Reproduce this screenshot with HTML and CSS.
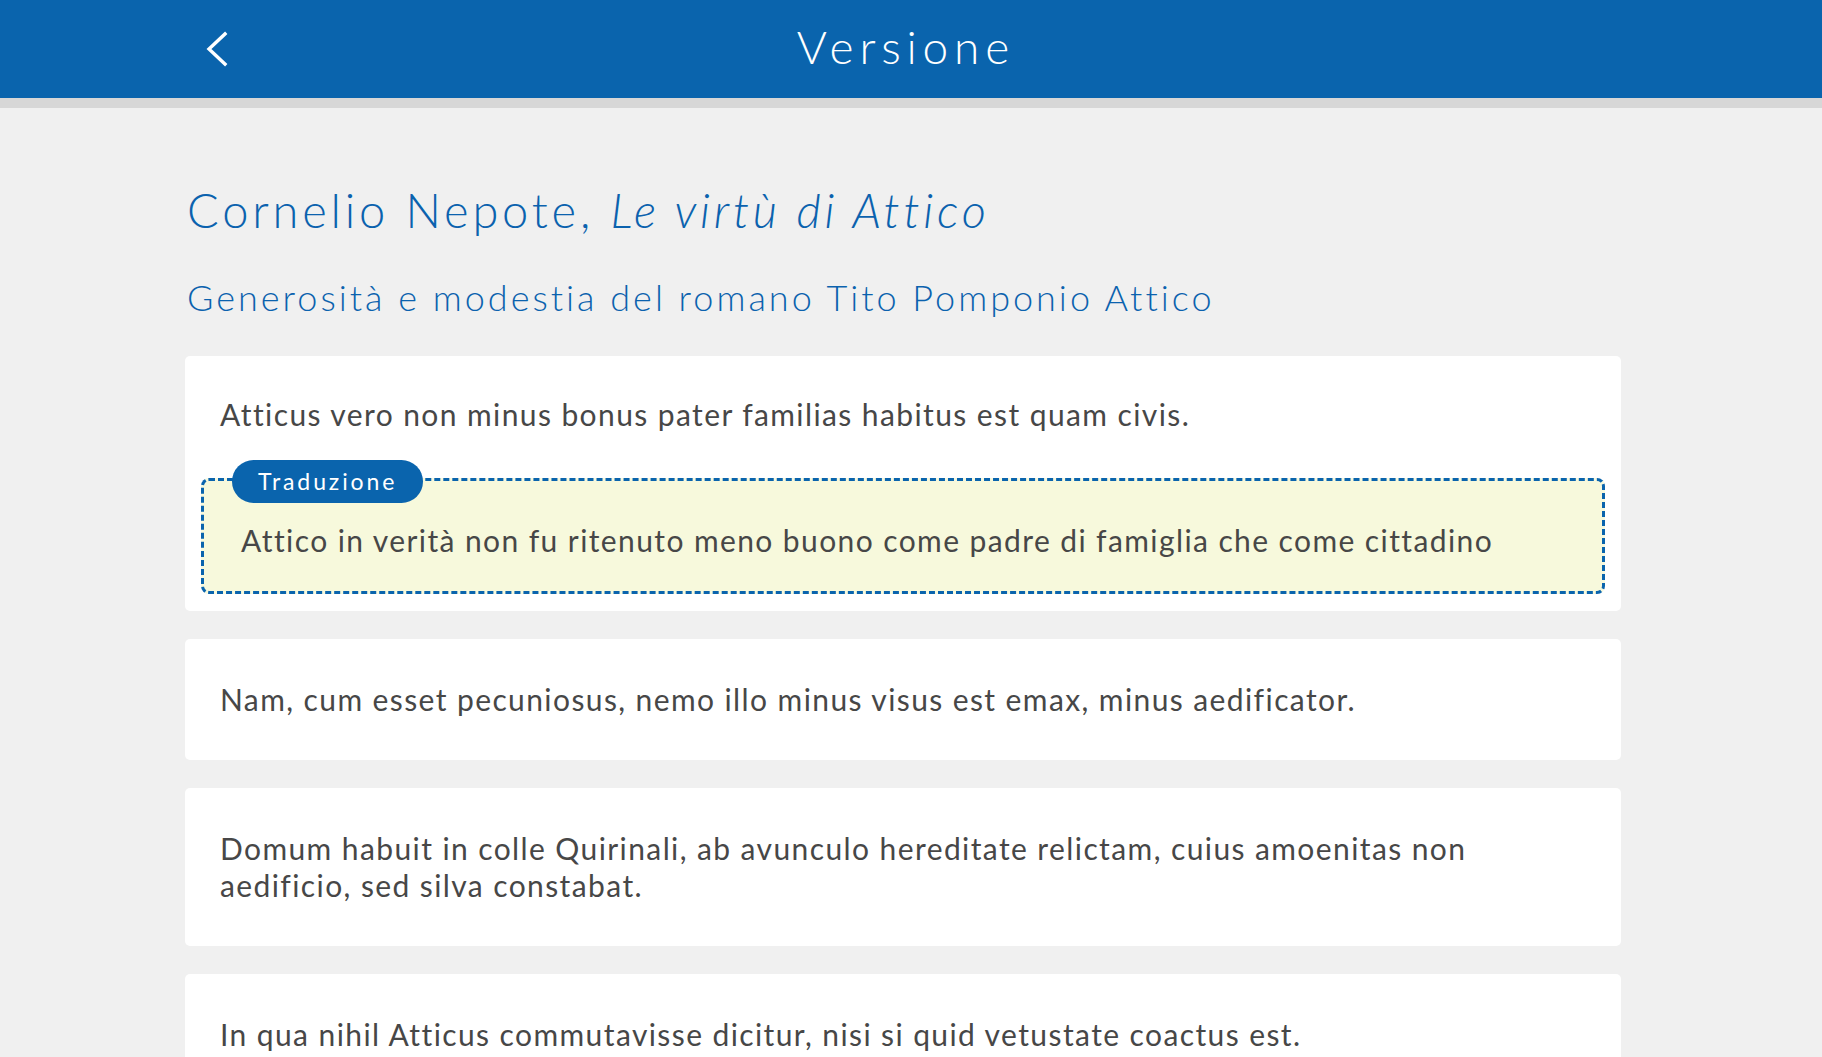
FILE: index.html
```html
<!DOCTYPE html>
<html lang="it">
<head>
<meta charset="utf-8">
<title>Versione</title>
<link rel="stylesheet" href="styles.css">
</head>
<body>
<header class="topbar">
  <div class="container topbar-inner">
    <a class="back" href="#" aria-label="Indietro">
      <svg width="24" height="36" viewBox="0 0 24 36"><path d="M19 3 L3 18 L19 33" fill="none" stroke="#fff" stroke-width="3.4" stroke-linecap="square" stroke-linejoin="miter"/></svg>
    </a>
    <h1 class="topbar-title">Versione</h1>
    <span class="spacer"></span>
  </div>
</header>
<div class="band"></div>
<main class="container content">
  <h2 class="work-title">Cornelio Nepote, <em>Le virtù di Attico</em></h2>
  <h3 class="work-subtitle">Generosità e modestia del romano Tito Pomponio Attico</h3>

  <section class="card card-open">
    <p class="latin">Atticus vero non minus bonus pater familias habitus est quam civis.</p>
    <div class="translation">
      <span class="badge">Traduzione</span>
      <p class="translation-text">Attico in verità non fu ritenuto meno buono come padre di famiglia che come cittadino</p>
    </div>
  </section>

  <section class="card">
    <p class="latin">Nam, cum esset pecuniosus, nemo illo minus visus est emax, minus aedificator.</p>
  </section>

  <section class="card">
    <p class="latin">Domum habuit in colle Quirinali, ab avunculo hereditate relictam, cuius amoenitas non aedificio, sed silva constabat.</p>
  </section>

  <section class="card">
    <p class="latin">In qua nihil Atticus commutavisse dicitur, nisi si quid vetustate coactus est.</p>
  </section>
</main>
</body>
</html>
```
FILE: styles.css
```css
html, body {
  margin: 0;
  padding: 0;
  background: #f0f0f0;
  font-family: "Lato", "Open Sans", sans-serif;
}

.container {
  width: 1436px;
  margin-left: 185px;
}

.topbar {
  background: #0a64ad;
  height: 98px;
}

.topbar-inner {
  height: 98px;
  display: grid;
  grid-template-columns: 1fr auto 1fr;
  align-items: center;
}

.back {
  display: flex;
  align-items: center;
  margin-left: 21px;
  width: 24px;
  height: 36px;
}

.topbar-title {
  margin: 0;
  color: #fff;
  font-weight: 300;
  font-size: 46px;
  letter-spacing: 5.8px;
  padding-left: 5.8px;
  line-height: 1;
  padding-bottom: 4px;
}

.band {
  height: 10px;
  background: #d7d7d7;
}

.content {
  padding-top: 74px;
}

.work-title {
  margin: 0;
  color: #0b62ae;
  font-weight: 300;
  font-size: 47px;
  line-height: 56px;
  letter-spacing: 3.8px;
  padding-left: 2px;
}

.work-title em {
  font-style: italic;
}

.work-subtitle {
  margin: 37px 0 37px;
  color: #0b62ae;
  font-weight: 300;
  font-size: 36px;
  line-height: 44px;
  letter-spacing: 3px;
  padding-left: 2px;
}

.card {
  background: #fff;
  border-radius: 5px;
  padding: 42px 35px 42px;
  margin-bottom: 28px;
}

.card-open {
  padding-top: 40px;
  padding-bottom: 17px;
}

.latin {
  margin: 0;
  color: #474747;
  font-size: 30px;
  line-height: 37px;
  letter-spacing: 1.4px;
}

.translation {
  position: relative;
  margin: 45px -19px 0;
  background: #f7f9dc;
  border: 3px dashed #0a64ad;
  border-radius: 8px;
  padding: 41px 37px 32px;
}

.badge {
  position: absolute;
  top: -21px;
  left: 28px;
  height: 43px;
  padding: 0 26px;
  border-radius: 22px;
  background: #0a64ad;
  color: #fff;
  font-size: 23px;
  letter-spacing: 2.9px;
  line-height: 43px;
}

.translation-text {
  margin: 0;
  color: #474747;
  font-size: 30px;
  line-height: 37px;
  letter-spacing: 1.4px;
}
```
